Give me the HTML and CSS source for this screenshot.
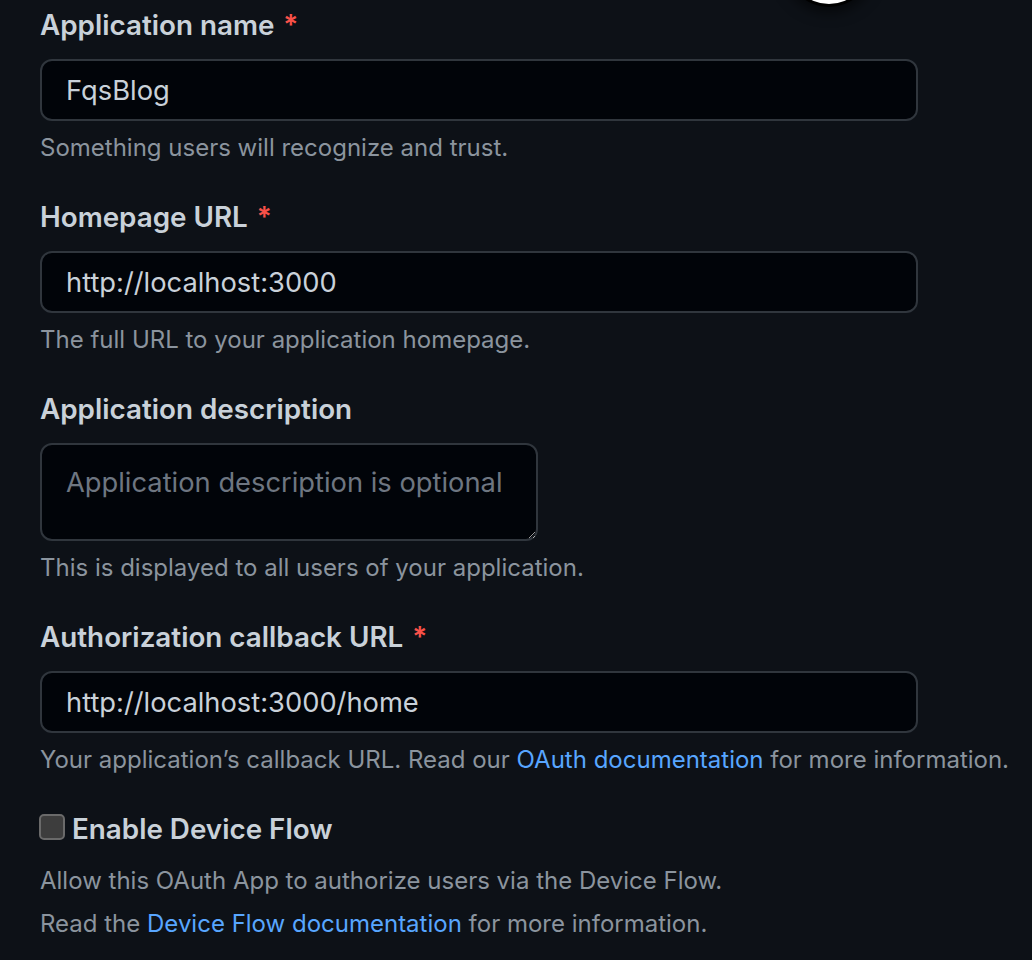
FILE: index.html
```html
<!DOCTYPE html>
<html lang="en">
<head>
<meta charset="utf-8">
<title>Register a new OAuth app</title>
<link rel="stylesheet" href="styles.css">
</head>
<body>
<div class="avatar"></div>
<form class="form">
  <div class="group">
    <label class="label" for="name">Application name <span class="req">*</span></label>
    <input class="input" id="name" type="text" value="FqsBlog">
    <p class="note">Something users will recognize and trust.</p>
  </div>
  <div class="group">
    <label class="label" for="home">Homepage URL <span class="req">*</span></label>
    <input class="input" id="home" type="text" value="http://localhost:3000">
    <p class="note">The full URL to your application homepage.</p>
  </div>
  <div class="group">
    <label class="label" for="desc">Application description</label>
    <textarea class="textarea" id="desc" placeholder="Application description is optional"></textarea>
    <p class="note">This is displayed to all users of your application.</p>
  </div>
  <div class="group">
    <label class="label" for="cb">Authorization callback URL <span class="req">*</span></label>
    <input class="input" id="cb" type="text" value="http://localhost:3000/home">
    <p class="note">Your application’s callback URL. Read our <a class="link" href="#">OAuth documentation</a> for more information.</p>
  </div>
  <div class="group check-group">
    <label class="check-label"><input class="checkbox" type="checkbox"> Enable Device Flow</label>
    <p class="note note-first">Allow this OAuth App to authorize users via the Device Flow.</p>
    <p class="note note-second">Read the <a class="link" href="#">Device Flow documentation</a> for more information.</p>
  </div>
</form>
</body>
</html>
```

FILE: styles.css
```css
html, body {
  margin: 0;
  padding: 0;
  background: #0d1117;
  color-scheme: dark;
}
body {
  position: relative;
  font-family: Inter, "Noto Sans", "Liberation Sans", sans-serif;
  color: #c9d1d9;
  overflow: hidden;
  height: 960px;
}
.avatar {
  position: absolute;
  left: 789px;
  top: -76px;
  width: 80px;
  height: 80px;
  border-radius: 50%;
  background: #ffffff;
  box-shadow: 0 0 0 3px #000000, 0 2px 14px 6px rgba(0,0,0,0.6);
}
.form {
  padding: 7px 0 0 40px;
  width: 990px;
}
.group {
  display: flex;
  flex-direction: column;
  align-items: flex-start;
  margin-bottom: 33px;
}
.label {
  font-size: 27.8px;
  font-weight: 600;
  line-height: 36px;
  color: #c9d1d9;
  margin-bottom: 16px;
}
.req {
  color: #f85149;
  margin-left: 2px;
}
.input, .textarea {
  box-sizing: border-box;
  width: 878px;
  height: 62px;
  margin: 0;
  padding: 0 24px;
  background: #010409;
  border: 2px solid #30363d;
  border-radius: 12px;
  color: #c9d1d9;
  font-family: inherit;
  font-size: 27.3px;
  line-height: 36px;
  outline: none;
}
.textarea {
  width: 498px;
  height: 98px;
  padding: 20px 24px;
  resize: vertical;
}
.textarea::placeholder {
  color: #6e7681;
}
.note {
  margin: 9px 0 0;
  font-size: 24px;
  line-height: 36px;
  color: #8b949e;
  white-space: nowrap;
}
.link {
  color: #58a6ff;
  text-decoration: none;
}
.check-label {
  display: flex;
  align-items: center;
  gap: 7px;
  font-size: 27.8px;
  font-weight: 600;
  line-height: 36px;
  color: #c9d1d9;
}
.checkbox {
  appearance: none;
  -webkit-appearance: none;
  box-sizing: border-box;
  width: 26px;
  height: 26px;
  margin: -4px 0 0 -1px;
  background: #3d3d3d;
  border: 2px solid #6a6a6a;
  border-radius: 5px;
}
.note-first {
  margin-top: 16px;
}
.note-second {
  margin-top: 7px;
}
```
